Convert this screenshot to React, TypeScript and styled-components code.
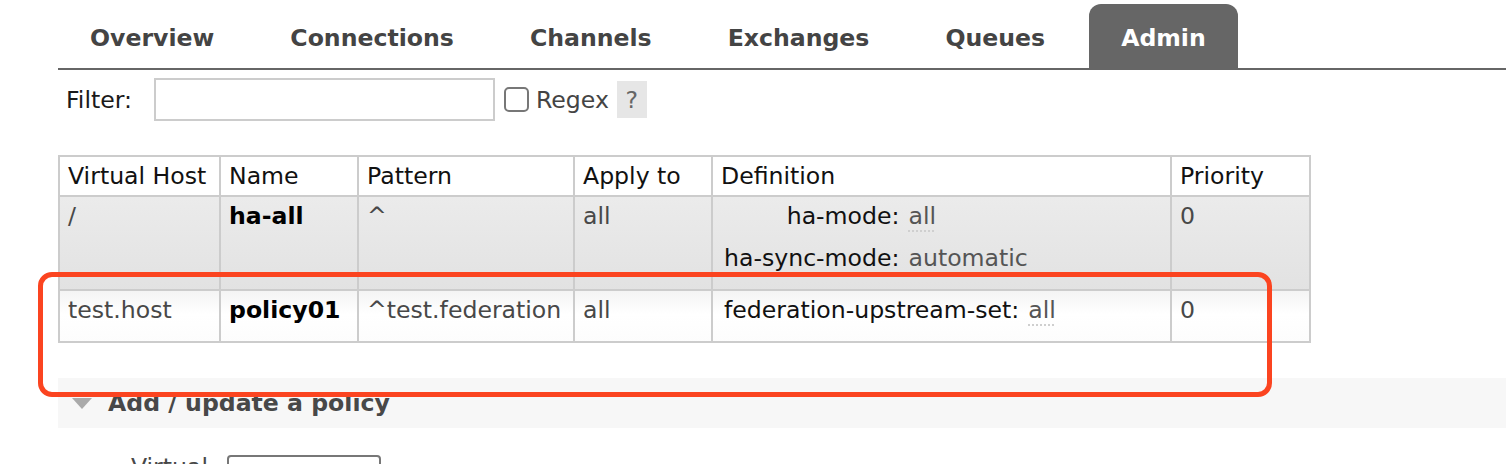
import React from "react";
import styled, { createGlobalStyle } from "styled-components";

const GlobalStyle = createGlobalStyle`
  html, body {
    margin: 0;
    padding: 0;
    background: #fff;
    overflow: hidden;
  }
  body {
    font-family: "DejaVu Sans", Verdana, sans-serif;
    font-size: 23.6px;
    line-height: 30px;
    color: #484848;
  }
  * { box-sizing: border-box; }
`;

const Page = styled.div`
  position: relative;
  padding-left: 58px;
`;

const TabBar = styled.ul`
  display: flex;
  margin: 0;
  padding: 4px 0 0 0;
  list-style: none;
  border-bottom: 2px solid #666;
`;

const Tab = styled.li<{ $active?: boolean }>`
  display: flex;
  align-items: center;
  height: 64px;
  padding: 3px 32px 0 32px;
  margin-right: 12px;
  font-weight: bold;
  color: ${(p) => (p.$active ? "#fff" : "#444")};
  background: ${(p) => (p.$active ? "#666" : "transparent")};
  border-radius: 12px 12px 0 0;
`;

const FilterRow = styled.div`
  display: flex;
  align-items: center;
  height: 43px;
  margin-top: 8px;
  padding-left: 8px;
`;

const FilterLabel = styled.span`
  color: #1a1a1a;
  margin-right: 22px;
`;

const FilterInput = styled.div`
  width: 341px;
  height: 43px;
  border: 2px solid #ccc;
  background: #fff;
`;

const Checkbox = styled.span`
  width: 25px;
  height: 25px;
  margin-left: 9px;
  border: 2px solid #777;
  border-radius: 5px;
  background: #fff;
`;

const RegexLabel = styled.span`
  margin-left: 7px;
  color: #444;
`;

const HelpBox = styled.span`
  display: flex;
  align-items: center;
  justify-content: center;
  width: 30px;
  height: 37px;
  margin-left: 8px;
  background: #e6e6e6;
  color: #666;
`;

const Table = styled.table`
  margin-top: 34px;
  width: 1253px;
  table-layout: fixed;
  border-collapse: separate;
  border-spacing: 0;
  border-top: 2px solid #ccc;
  border-left: 2px solid #ccc;
`;

const Th = styled.th<{ $w: number }>`
  width: ${(p) => p.$w}px;
  padding: 4px 8px;
  text-align: left;
  font-weight: normal;
  color: #111;
  border-right: 2px solid #ccc;
  border-bottom: 2px solid #ccc;
  background: #fff;
  white-space: nowrap;
`;

const Row = styled.tr<{ $alt: 1 | 2 }>`
  background: ${(p) =>
    p.$alt === 1
      ? "linear-gradient(#ebebeb, #e2e2e2)"
      : "linear-gradient(#f4f4f4, #ffffff 45%, #fcfcfc)"};
`;

const Td = styled.td<{ $strong?: boolean }>`
  padding: 4px 8px;
  vertical-align: top;
  border-right: 2px solid #ccc;
  border-bottom: 2px solid #ccc;
  white-space: nowrap;
  color: ${(p) => (p.$strong ? "#000" : "#484848")};
  font-weight: ${(p) => (p.$strong ? "bold" : "normal")};
`;

const Definition = styled.div`
  display: grid;
  grid-template-columns: auto auto;
  justify-content: start;
`;

const DefKey = styled.span`
  text-align: right;
  padding: 0 4px 12px 3px;
  color: #111;
`;

const DefValue = styled.span`
  padding: 0 0 12px 5px;
  color: #555;
`;

const Abbr = styled.span`
  text-decoration: underline dotted #cfcfcf;
  text-decoration-thickness: 2px;
  text-underline-offset: 6px;
`;

const Section = styled.div`
  margin-top: 35px;
`;

const SectionHeader = styled.div`
  display: flex;
  align-items: center;
  height: 50px;
  background: #f7f7f7;
`;

const Triangle = styled.span`
  width: 0;
  height: 0;
  margin-left: 14px;
  border-left: 10px solid transparent;
  border-right: 10px solid transparent;
  border-top: 11px solid #aaa;
`;

const SectionTitle = styled.h2`
  margin: 0 0 0 16px;
  font-size: 23.6px;
  font-weight: bold;
  color: #484848;
`;

const FormRow = styled.div`
  display: flex;
  align-items: flex-start;
  margin-top: 24px;
  padding-left: 50px;
`;

const FormLabel = styled.span`
  width: 100px;
  text-align: right;
  color: #484848;
`;

const FormInput = styled.div`
  width: 154px;
  height: 40px;
  margin: 3px 0 0 19px;
  border: 2px solid #777;
  border-radius: 4px;
  background: #fff;
`;

const Annotation = styled.div`
  position: absolute;
  left: 38px;
  top: 272px;
  width: 1234px;
  height: 125px;
  border: 5px solid #fb4420;
  border-radius: 14px;
  pointer-events: none;
`;

const tabs = ["Overview", "Connections", "Channels", "Exchanges", "Queues", "Admin"];

const columns: [string, number][] = [
  ["Virtual Host", 161],
  ["Name", 138],
  ["Pattern", 216],
  ["Apply to", 138],
  ["Definition", 459],
  ["Priority", 139],
];

type Policy = {
  vhost: string;
  name: string;
  pattern: string;
  applyTo: string;
  definition: [string, string][];
  priority: string;
};

const policies: Policy[] = [
  {
    vhost: "/",
    name: "ha-all",
    pattern: "^",
    applyTo: "all",
    definition: [
      ["ha-mode:", "all"],
      ["ha-sync-mode:", "automatic"],
    ],
    priority: "0",
  },
  {
    vhost: "test.host",
    name: "policy01",
    pattern: "^test.federation",
    applyTo: "all",
    definition: [["federation-upstream-set:", "all"]],
    priority: "0",
  },
];

export default function App() {
  return (
    <>
      <GlobalStyle />
      <Page>
        <TabBar>
          {tabs.map((t) => (
            <Tab key={t} $active={t === "Admin"}>
              {t}
            </Tab>
          ))}
        </TabBar>

        <FilterRow>
          <FilterLabel>Filter:</FilterLabel>
          <FilterInput />
          <Checkbox />
          <RegexLabel>Regex</RegexLabel>
          <HelpBox>?</HelpBox>
        </FilterRow>

        <Table>
          <thead>
            <tr>
              {columns.map(([label, w]) => (
                <Th key={label} $w={w}>
                  {label}
                </Th>
              ))}
            </tr>
          </thead>
          <tbody>
            {policies.map((p, i) => (
              <Row key={p.name} $alt={i % 2 === 0 ? 1 : 2}>
                <Td>{p.vhost}</Td>
                <Td $strong>{p.name}</Td>
                <Td>{p.pattern}</Td>
                <Td>{p.applyTo}</Td>
                <Td>
                  <Definition>
                    {p.definition.map(([k, v]) => (
                      <React.Fragment key={k}>
                        <DefKey>{k}</DefKey>
                        <DefValue>
                          {v === "all" ? <Abbr>{v}</Abbr> : v}
                        </DefValue>
                      </React.Fragment>
                    ))}
                  </Definition>
                </Td>
                <Td>{p.priority}</Td>
              </Row>
            ))}
          </tbody>
        </Table>

        <Section>
          <SectionHeader>
            <Triangle />
            <SectionTitle>Add / update a policy</SectionTitle>
          </SectionHeader>
          <FormRow>
            <FormLabel>Virtual host:</FormLabel>
            <FormInput />
          </FormRow>
        </Section>

        <Annotation />
      </Page>
    </>
  );
}
